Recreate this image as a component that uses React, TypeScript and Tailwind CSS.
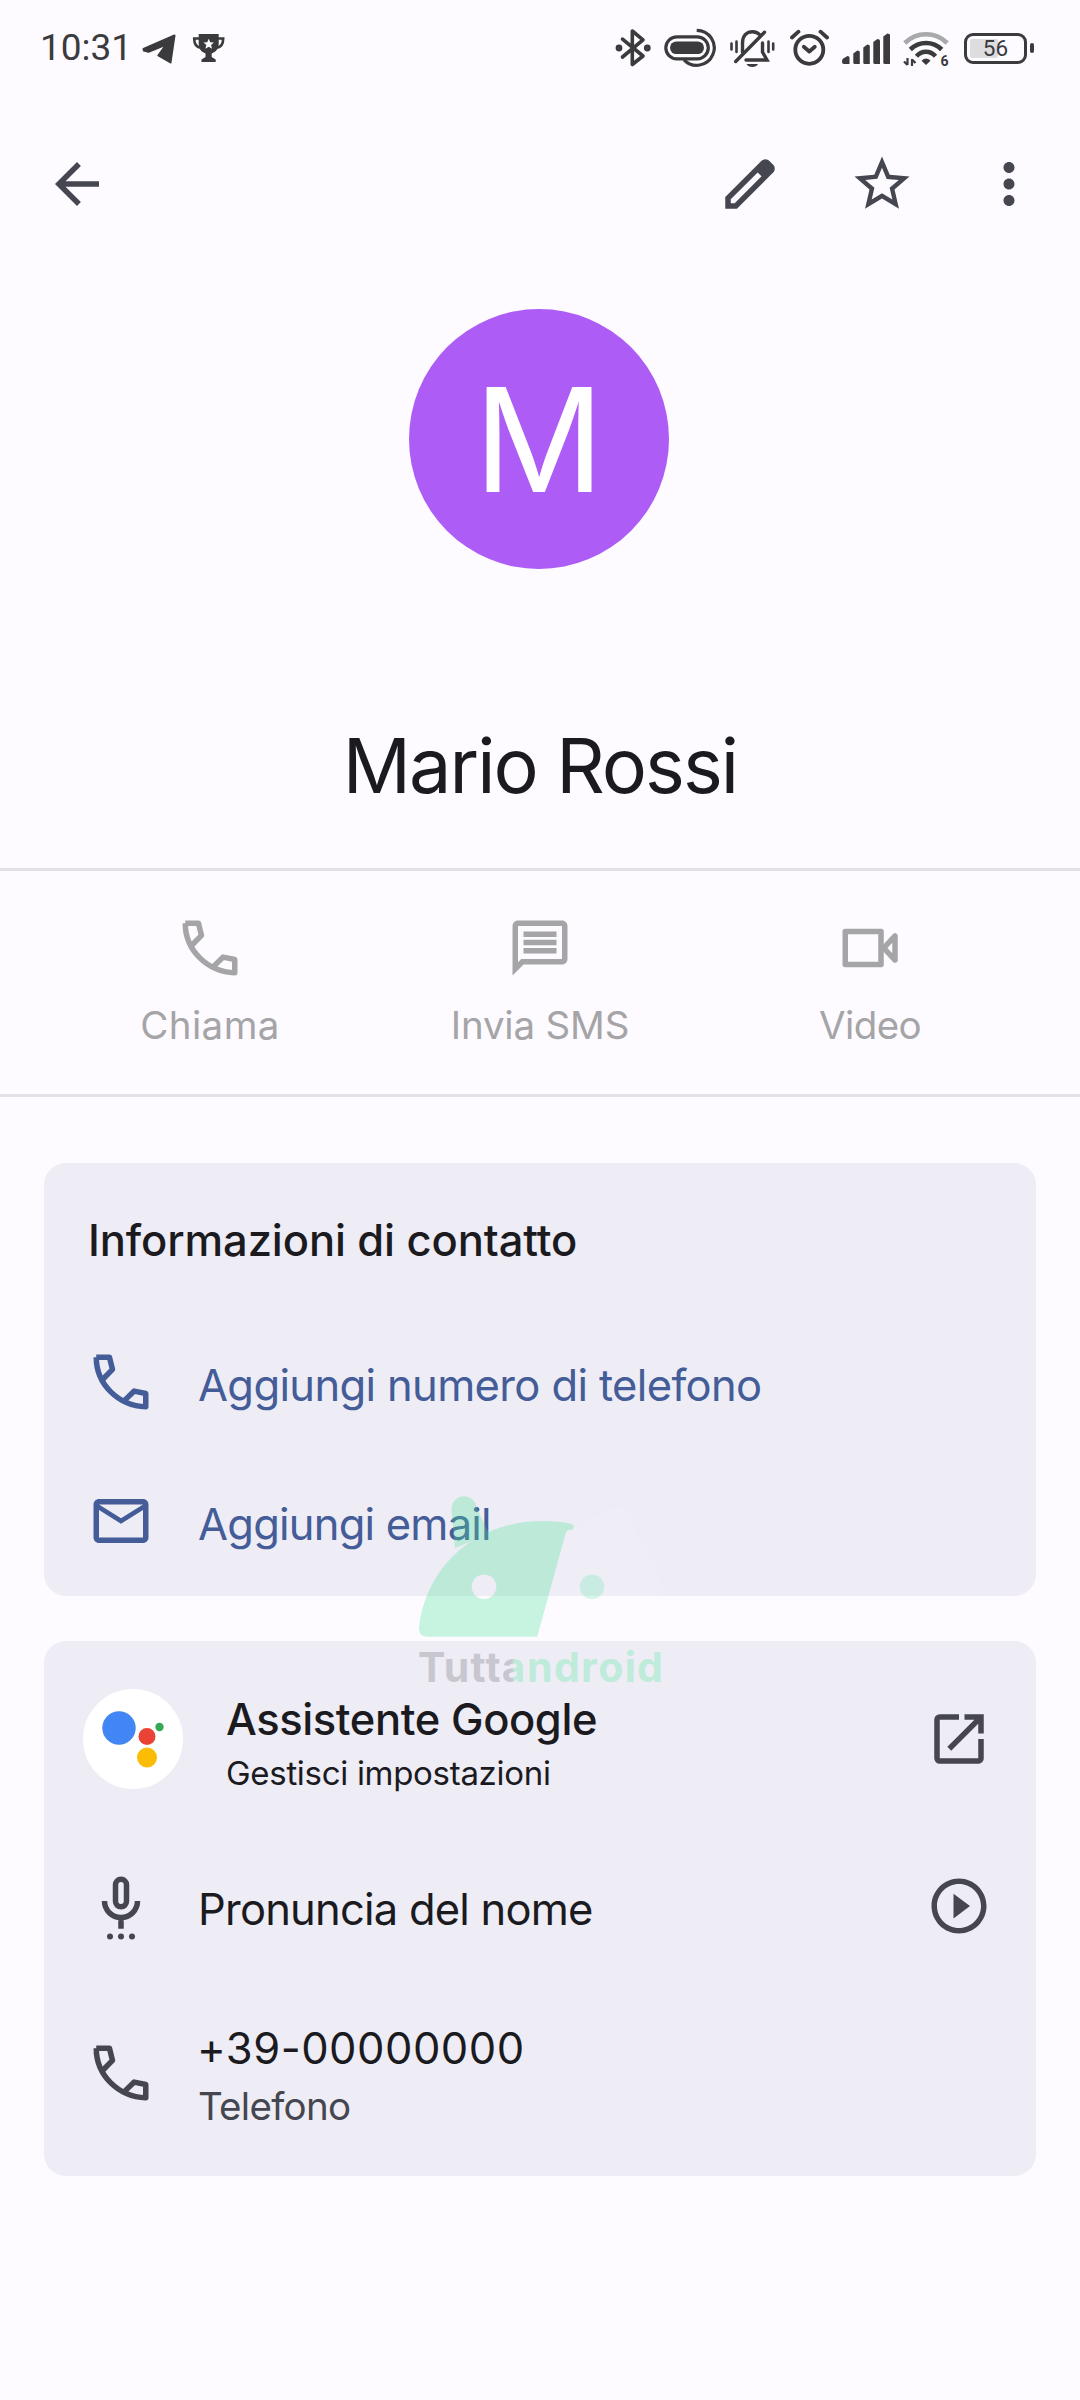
import type { ReactNode } from 'react'
import {
  MdArrowBack,
  MdMailOutline,
  MdMoreVert,
  MdOpenInNew,
  MdOutlineMessage,
  MdPlayCircleOutline,
  MdStarBorder,
} from 'react-icons/md'

const PhoneIcon = () => (
  <svg className="size-[66px] shrink-0" viewBox="0 0 24 24" fill="none" stroke="currentColor" strokeWidth="2" strokeLinejoin="round">
    <path d="M3 3h4.8l1.1 4.4-3.5 3.6M3 3c0 9.9 8.1 17.7 18 18v-4.8l-4.2-.9-3.3 3.2" />
  </svg>
)

const VideoIcon = () => (
  <svg className="size-[66px] shrink-0" viewBox="0 0 24 24" fill="none" stroke="currentColor" strokeWidth="2" strokeLinejoin="round">
    <path d="M3 6h13v12H3z" />
    <path d="M17 12l4.1-4.4v8.8z" />
  </svg>
)

const EditIcon = () => (
  <svg className="size-[66px] shrink-0" viewBox="0 0 24 24" fill="currentColor">
    <path d="M5 19h1.425L16.2 9.225 14.775 7.8 5 17.575V19Zm-2 2v-4.25L16.2 3.575Q16.5 3.3 16.86 3.15 17.22 3 17.62 3q.4 0 .78.15.37.15.65.45L20.42 5q.3.28.44.65.14.38.14.75 0 .4-.14.76-.14.37-.44.67L7.25 21H3Z" />
  </svg>
)

const MicIcon = () => (
  <svg className="size-[66px] shrink-0 overflow-visible" viewBox="0 0 24 24" fill="none" stroke="currentColor" strokeWidth="2">
    <rect x="10" y="2.3" width="4" height="10" rx="2" />
    <path d="M6 10.2a6 6 0 0 0 12 0M12 16v4.3" />
    <g fill="currentColor" stroke="none">
      <circle cx="8" cy="23.1" r="1.1" />
      <circle cx="12" cy="23.1" r="1.1" />
      <circle cx="16" cy="23.1" r="1.1" />
    </g>
  </svg>
)

const AssistantIcon = () => (
  <svg className="size-[100px] shrink-0" viewBox="0 0 100 100">
    <circle cx="50" cy="50" r="50" fill="#fff" />
    <circle cx="36" cy="39" r="16.7" fill="#4285f4" />
    <circle cx="64" cy="47.5" r="8.5" fill="#ea4335" />
    <circle cx="64" cy="68.5" r="10" fill="#fbbc05" />
    <circle cx="76.5" cy="38" r="4.2" fill="#34a853" />
  </svg>
)

function StatusBar() {
  return (
    <div className="flex h-24 items-center pl-[40px] pr-[46px] text-[#3b3a3d]">
      <span className="w-[102px] font-['Roboto',sans-serif] text-[37px] leading-[48px] font-[450]">10:31</span>
      {/* telegram */}
      <svg className="h-10 w-[35px]" viewBox="0 0 35 40" fill="currentColor" stroke="currentColor" strokeWidth="2" strokeLinejoin="round">
        <path d="M1.5 20.8L32.5 7.5 28.5 34.5 16.3 27.5 24.2 16.5 6.5 23.8 1.8 22.6z" />
      </svg>
      {/* trophy */}
      <svg className="ml-[15px] h-10 w-[34px]" viewBox="0 0 34 40">
        <path d="M7.5 10.5H2.2c0 6 2 9 7 9.5M25.9 10.5h5.3c0 6-2 9-7 9.5" fill="none" stroke="currentColor" strokeWidth="2.6" />
        <path d="M6.7 6h20v10c0 5-3 8-7 9.5V29l4 2.5V34H9.5v-2.5l4-2.5v-3.5c-4-1.500-6.800-4.500-6.800-9.500z" fill="currentColor" />
        <path d="M16.7 10.8l1.5 3.5 3.7.3-2.8 2.5.9 3.700-3.300-2-3.300 2 .900-3.700-2.800-2.500 3.700-.300z" fill="#fdfbff" />
      </svg>

      <div className="ml-auto flex items-center">
        {/* bluetooth */}
        <svg className="h-10 w-9" viewBox="0 0 36 40" fill="none" stroke="currentColor" strokeWidth="3.6" strokeLinejoin="round" strokeLinecap="round">
          <path d="M7.5 11.2L28 28 17.3 36.500V3L28 11.800 7.500 29" />
          <circle cx="4" cy="20" r="1.6" />
          <circle cx="32.3" cy="20" r="1.6" />
        </svg>
        {/* capsule with ring */}
        <svg className="ml-[13px] h-10 w-[53px]" viewBox="0 0 53 40" fill="none" stroke="currentColor">
          <rect x="1.8" y="8.8" width="42.5" height="22" rx="11" strokeWidth="3.2" />
          <rect x="6" y="13.5" width="34" height="12.6" rx="6.3" fill="currentColor" stroke="none" />
          <path d="M32.7 2.3A17.5 17.5 0 1 1 20 31.8" strokeWidth="3.2" />
        </svg>
        {/* vibrate, bell off */}
        <svg className="ml-[13px] h-10 w-[45px]" viewBox="0 0 45 40" fill="none" stroke="currentColor" strokeWidth="3.4" strokeLinecap="round">
          <path d="M12.5 24V15C12.5 7.5 17 3.7 22.500 3.700c3 0 5.500 1 7.500 3.300M32.500 15v9l4.500 8H16" />
          <path d="M5.7 33.5L34.5 4.3" />
          <path d="M1.5 15.5v6M6.5 13.5V24M38.5 13.5V24M43.2 15.5v6" strokeWidth="2.6" />
          <path d="M16.5 36H28c-1.5 4-10 4-11.500 0z" fill="currentColor" stroke="none" />
        </svg>
        {/* alarm */}
        <svg className="ml-[15px] h-10 w-[39px]" viewBox="0 0 39 40" fill="none" stroke="currentColor" strokeWidth="3.8" strokeLinecap="round" strokeLinejoin="round">
          <circle cx="19.3" cy="21.8" r="14" />
          <path d="M13.8 18.8l5.5 4.7 5.5-4.7" />
          <path d="M2 9.5l6.5-5.8M30.5 3.7L37 9.5" />
        </svg>
        {/* signal */}
        <svg className="ml-[13px] h-10 w-12" viewBox="0 0 48 40" fill="currentColor">
          <path d="M0 33q0-2 2-3l3.5-2q2 0 2 1.5V36H2q-2 0-2-2z" />
          <path d="M11.3 25.5l4-3q2.5 0 2.5 1.5v12h-5q-1.5 0-1.5-1.5z" />
          <path d="M21.3 19.5l4-3q2.5 0 2.5 1.5v18h-5q-1.5 0-1.5-1.5z" />
          <path d="M31.3 14l4-3q2.7 0 2.7 1.5V36h-5q-1.7 0-1.7-1.5z" />
          <path d="M41.3 8.5l4-3q2.7 0 2.7 1.5v29h-5q-1.7 0-1.7-1.5z" />
        </svg>
        {/* wifi 6 */}
        <div className="relative ml-[13px] h-10 w-[46px]">
          <svg className="size-full" viewBox="0 0 46 40" fill="none" stroke="currentColor" strokeWidth="4.6">
            <path d="M1.8 15Q11 6.3 23 6.3T44.2 15" stroke="#a9a8ab" />
            <path d="M7.3 21.5Q14 15 23 15t15.7 6.5" />
            <path d="M13.5 28.2Q17.500 23.800 23 23.800t9.500 4.400" />
            <path d="M18.5 32.7Q23 28.5 27.5 32.7L23 37z" fill="currentColor" stroke="none" />
            <path d="M4.5 30v7M1 33.5L4.5 37M9 38v-7M9 31.5l3.5 3.5" strokeWidth="2.2" />
          </svg>
          <span className="absolute top-[25px] left-[37.5px] font-['Roboto',sans-serif] text-[14px] leading-[16px] font-bold">6</span>
        </div>
        {/* battery */}
        <div className="relative ml-[15px] flex h-[31px] w-[63px] items-center justify-center rounded-[9px] border-[3.5px] border-[#3b3a3d]">
          <span className="absolute inset-y-[3px] left-[3px] w-[28px] rounded-[2px] bg-[#dddcdf]" />
          <span className="relative font-['Roboto',sans-serif] text-[22.5px] leading-6">56</span>
        </div>
        <span className="ml-[3px] h-[10px] w-[4px] rounded-[2px] bg-[#3b3a3d]" />
      </div>
    </div>
  )
}

function Action({ icon, label }: { icon: ReactNode; label: ReactNode }) {
  return (
    <div className="flex flex-1 flex-col items-center">
      {icon}
      {label}
    </div>
  )
}

function AddRow({ icon, children }: { icon: ReactNode; children: ReactNode }) {
  return (
    <div className="flex h-[139px] items-center gap-[44px] px-[44px] text-[#445c97]">
      {icon}
      {children}
    </div>
  )
}

// Tuttandroid logo laid over the page
function Watermark() {
  return (
    <div className="pointer-events-none absolute top-[1490px] left-[410px] w-[270px]">
      <svg className="h-[153px] w-[270px] opacity-30" viewBox="0 0 270 153">
        <g fill="#4ee59b">
          <path
            fillRule="evenodd"
            d="M17 146.7Q8 146.5 9 137C15 82 60 31 133 31q17 0 29 3 4 3 0 6-4-1-6 2l-28.7 104.7zM74 84.5a12.3 12.3 0 1 0 0 24.6 12.3 12.3 0 0 0 0-24.6z"
          />
          <path d="M41.5 20a12.5 12.5 0 0 1 25-2.500L79 44 45 58z" />
          <circle cx="182" cy="96.7" r="12.3" />
        </g>
        <path d="M162 40l36-20 20-4 6 24q30 40 34 100l-4 7H127.3l29-105z" fill="#fff" opacity=".25" />
      </svg>
      <div className="ml-[8px] flex text-[41px] leading-[48px] font-bold tracking-[1.35px]">
        <span className="text-[#c8c6ce]">Tutt</span>
        <span className="bg-gradient-to-r from-[#c8c6ce] from-40% to-[#bfebdb] to-50% bg-clip-text text-transparent">a</span>
        <span className="text-[#bfebdb]">ndroid</span>
      </div>
    </div>
  )
}

export default function App() {
  return (
    <div className="relative flex h-[2400px] w-[1080px] flex-col overflow-hidden bg-[#fdfbff] font-['Inter',sans-serif] text-[#1b1b1f]">
      <StatusBar />

      <header className="flex h-[176px] items-center pr-[38px] pl-[44px] text-[#45464f]">
        <MdArrowBack className="size-[66px]" />
        <div className="ml-auto flex items-center">
          <EditIcon />
          <MdStarBorder className="ml-[66px] size-[66px]" />
          <MdMoreVert className="ml-[61px] size-[66px]" />
        </div>
      </header>

      <div className="mt-[37px] mr-[2px] flex size-[260px] items-center justify-center self-center rounded-full bg-[#ae5cf6] pt-[2px] text-[144px] leading-none text-white">
        M
      </div>
      <h1 className="mt-[149px] text-center text-[75.5px] leading-[96px] tracking-[-1.94px]">Mario Rossi</h1>

      <section className="mt-[54px] flex h-[229px] border-y-[3px] border-[#e3e1e5] px-[45px] pt-[44px] text-[38.5px] leading-[48px] text-[#a5a4a7]">
        <Action icon={<PhoneIcon />} label={<span className="mt-5 tracking-[.4px]">Chiama</span>} />
        <Action
          icon={<MdOutlineMessage className="size-[66px]" />}
          label={<span className="mt-5 tracking-[-.18px]">Invia SMS</span>}
        />
        <Action icon={<VideoIcon />} label={<span className="mt-5 tracking-[-.6px]">Video</span>} />
      </section>

      <section className="mx-[44px] mt-[66px] h-[433px] rounded-[22px] bg-[#eeecf5] pt-[49px] text-[43.5px] leading-[56px]">
        <h2 className="mb-[44px] pl-[44px] font-medium tracking-[-.1px]">Informazioni di contatto</h2>
        <AddRow icon={<PhoneIcon />}>
          <span className="mt-[7px] tracking-[-.64px]">Aggiungi numero di telefono</span>
        </AddRow>
        <AddRow icon={<MdMailOutline className="size-[66px]" />}>
          <span className="mt-[7px] tracking-[-.78px]">Aggiungi email</span>
        </AddRow>
      </section>

      <section className="mx-[44px] mt-[45px] h-[535px] rounded-[22px] bg-[#eeecf5] pt-[48px] text-[43.5px] leading-[56px]">
        <div className="mb-[47px] flex h-[100px] items-center pr-[44px] pl-[38.5px]">
          <AssistantIcon />
          <div className="mt-[7px] ml-[43.5px] flex flex-col gap-[4px]">
            <span className="font-medium tracking-[-.41px]">Assistente Google</span>
            <span className="text-[33px] leading-[44px] tracking-[-.3px]">Gestisci impostazioni</span>
          </div>
          <MdOpenInNew className="ml-auto size-[66px] text-[#45464f]" />
        </div>
        <div className="flex h-[139px] items-center px-[44px] text-[#45464f]">
          <MicIcon />
          <span className="mt-[7px] ml-[44px] tracking-[-.78px] text-[#1b1b1f]">Pronuncia del nome</span>
          <MdPlayCircleOutline className="ml-auto size-[66px]" />
        </div>
        <div className="flex h-[195px] items-center px-[44px] text-[#45464f]">
          <PhoneIcon />
          <div className="mt-[5px] ml-[43px] flex flex-col gap-[6px]">
            <span className="tracking-[.5px] text-[#1b1b1f]">+39-00000000</span>
            <span className="pl-px text-[38.5px] leading-[48px] tracking-[-.72px]">Telefono</span>
          </div>
        </div>
      </section>

      <Watermark />
    </div>
  )
}
